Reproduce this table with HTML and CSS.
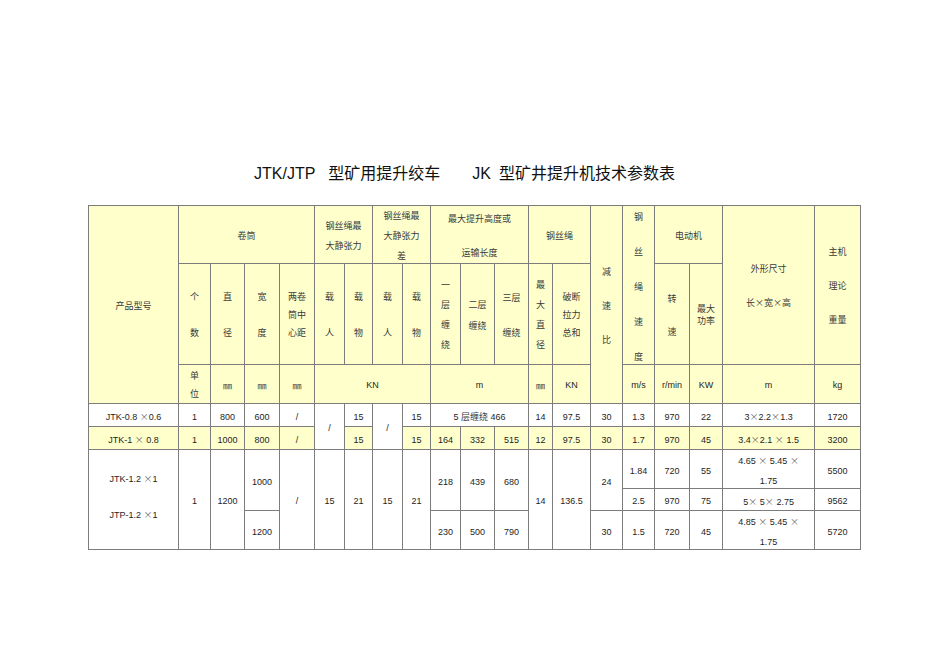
FILE: index.html
```html
<!DOCTYPE html>
<html lang="zh-CN">
<head>
<meta charset="utf-8">
<title>JTK/JTP 型矿用提升绞车 JK 型矿井提升机技术参数表</title>
<link rel="stylesheet" href="styles.css">
</head>
<body>
<div class="page">
  <h1 class="title"><span>JTK/JTP</span><span class="t1">型矿用提升绞车</span><span class="t2">JK</span><span class="t3">型矿井提升机技术参数表</span></h1>
  <table class="spec">
    <colgroup>
      <col class="c1"><col class="c2"><col class="c3"><col class="c4"><col class="c5">
      <col class="c6"><col class="c7"><col class="c8"><col class="c9"><col class="c10">
      <col class="c11"><col class="c12"><col class="c13"><col class="c14"><col class="c15">
      <col class="c16"><col class="c17"><col class="c18"><col class="c19"><col class="c20">
    </colgroup>
    <thead>
      <tr class="r1">
        <td class="h" rowspan="3">产品型号</td>
        <td class="h" colspan="4">卷筒</td>
        <td class="h lh20" colspan="2">钢丝绳最<br>大静张力</td>
        <td class="h lh20" colspan="2"><div class="sq">钢丝绳最<br>大静张力<br>差</div></td>
        <td class="h lh34" colspan="3"><div class="sq">最大提升高度或<br>运输长度</div></td>
        <td class="h" colspan="2">钢丝绳</td>
        <td class="h lh34" rowspan="3">减<br>速<br>比</td>
        <td class="h lh35" rowspan="2"><div class="sq10">钢<br>丝<br>绳<br>速<br>度</div></td>
        <td class="h" colspan="2">电动机</td>
        <td class="h lh34" rowspan="2">外形尺寸<br>长×宽×高</td>
        <td class="h lh34" rowspan="2">主机<br>理论<br>重量</td>
      </tr>
      <tr class="r2">
        <td class="h lh36">个<br>数</td>
        <td class="h lh36">直<br>径</td>
        <td class="h lh36">宽<br>度</td>
        <td class="h lh18">两卷<br>筒中<br>心距</td>
        <td class="h lh36">载<br>人</td>
        <td class="h lh36">载<br>物</td>
        <td class="h lh36">载<br>人</td>
        <td class="h lh36">载<br>物</td>
        <td class="h lh20">一<br>层<br>缠<br>绕</td>
        <td class="h lh21">二层<br>缠绕</td>
        <td class="h lh35">三层<br>缠绕</td>
        <td class="h lh20">最<br>大<br>直<br>径</td>
        <td class="h lh18">破断<br>拉力<br>总和</td>
        <td class="h lh33">转<br>速</td>
        <td class="h lh12">最大<br>功率</td>
      </tr>
      <tr class="r3">
        <td class="h lh18"><div class="sq">单<br>位</div></td>
        <td class="h">㎜</td>
        <td class="h">㎜</td>
        <td class="h">㎜</td>
        <td class="h u" colspan="4">KN</td>
        <td class="h u" colspan="3">m</td>
        <td class="h">㎜</td>
        <td class="h u">KN</td>
        <td class="h u">m/s</td>
        <td class="h u">r/min</td>
        <td class="h u">KW</td>
        <td class="h u">m</td>
        <td class="h u">kg</td>
      </tr>
    </thead>
    <tbody>
      <tr class="ra">
        <td>JTK-0.8 <span class="x">×</span>0.6</td>
        <td>1</td>
        <td>800</td>
        <td>600</td>
        <td>/</td>
        <td rowspan="2">/</td>
        <td>15</td>
        <td rowspan="2">/</td>
        <td>15</td>
        <td colspan="3">5 <span class="cn">层缠绕</span> 466</td>
        <td>14</td>
        <td>97.5</td>
        <td>30</td>
        <td>1.3</td>
        <td>970</td>
        <td>22</td>
        <td>3<span class="x">×</span>2.2<span class="x">×</span>1.3</td>
        <td>1720</td>
      </tr>
      <tr class="rb">
        <td class="y">JTK-1 <span class="x">×</span> 0.8</td>
        <td class="y">1</td>
        <td class="y">1000</td>
        <td class="y">800</td>
        <td class="y">/</td>
        <td class="y">15</td>
        <td class="y">15</td>
        <td class="y">164</td>
        <td class="y">332</td>
        <td class="y">515</td>
        <td class="y">12</td>
        <td class="y">97.5</td>
        <td class="y">30</td>
        <td class="y">1.7</td>
        <td class="y">970</td>
        <td class="y">45</td>
        <td class="y">3.4<span class="x">×</span>2.1 <span class="x">×</span> 1.5</td>
        <td class="y">3200</td>
      </tr>
      <tr class="rc">
        <td class="lh36 up" rowspan="3">JTK-1.2 <span class="x">×</span>1<br>JTP-1.2 <span class="x">×</span>1</td>
        <td rowspan="3">1</td>
        <td rowspan="3">1200</td>
        <td rowspan="2">1000</td>
        <td rowspan="3">/</td>
        <td rowspan="3">15</td>
        <td rowspan="3">21</td>
        <td rowspan="3">15</td>
        <td rowspan="3">21</td>
        <td rowspan="2">218</td>
        <td rowspan="2">439</td>
        <td rowspan="2">680</td>
        <td rowspan="3">14</td>
        <td rowspan="3">136.5</td>
        <td rowspan="2">24</td>
        <td>1.84</td>
        <td>720</td>
        <td>55</td>
        <td class="lh20"><div class="sq">4.65 <span class="x">×</span> 5.45 <span class="x">×</span><br>1.75</div></td>
        <td>5500</td>
      </tr>
      <tr class="rd">
        <td>2.5</td>
        <td>970</td>
        <td>75</td>
        <td>5<span class="x">×</span> 5<span class="x">×</span> 2.75</td>
        <td>9562</td>
      </tr>
      <tr class="re">
        <td>1200</td>
        <td>230</td>
        <td>500</td>
        <td>790</td>
        <td>30</td>
        <td>1.5</td>
        <td>720</td>
        <td>45</td>
        <td class="lh20"><div class="sq">4.85 <span class="x">×</span> 5.45 <span class="x">×</span><br>1.75</div></td>
        <td>5720</td>
      </tr>
    </tbody>
  </table>
</div>
</body>
</html>
```
FILE: styles.css
```css
html, body {
  margin: 0;
  padding: 0;
  background: #ffffff;
}

body {
  font-family: "Liberation Sans", Arial, "Noto Sans CJK SC", sans-serif;
  color: #1e1e1e;
}

.page {
  padding-top: 162px;
}

.title {
  margin: 0 0 19px 254px;
  font-size: 16px;
  font-weight: normal;
  line-height: 24px;
  height: 24px;
  color: #111;
  white-space: nowrap;
}

.title .t1 { margin-left: 13px; }
.title .t2 { margin-left: 32px; }
.title .t3 { margin-left: 8px; }

.spec {
  margin-left: 88px;
  border-collapse: collapse;
  table-layout: fixed;
  width: 773px;
}

.c1 { width: 90px; }
.c2 { width: 32px; }
.c3 { width: 34px; }
.c4 { width: 35px; }
.c5 { width: 35px; }
.c6 { width: 30px; }
.c7 { width: 28px; }
.c8 { width: 30px; }
.c9 { width: 28px; }
.c10 { width: 30px; }
.c11 { width: 34px; }
.c12 { width: 34px; }
.c13 { width: 24px; }
.c14 { width: 38px; }
.c15 { width: 32px; }
.c16 { width: 32px; }
.c17 { width: 35px; }
.c18 { width: 33px; }
.c19 { width: 92px; }
.c20 { width: 46px; }

.spec td {
  border: 1px solid #7c7c7c;
  padding: 4px 0 0;
  text-align: center;
  vertical-align: middle;
  font-size: 9px;
  line-height: 11px;
  overflow: hidden;
  white-space: nowrap;
}

.spec td.up {
  padding: 0 0 6px;
}

.spec td.h {
  background: #ffffcc;
  font-family: "Noto Sans CJK SC", sans-serif;
  color: #3a3a3a;
  padding: 2px 0 0;
}

.spec td.h.u {
  font-family: "Liberation Sans", Arial, sans-serif;
  color: #1e1e1e;
}

.spec td.y {
  background: #ffffcc;
}

.r1 { height: 58px; }
.r2 { height: 101px; }
.r3 { height: 39px; }
.ra { height: 23px; }
.rb { height: 23px; }
.rc { height: 39px; }
.rd { height: 22px; }
.re { height: 39px; }

.spec td.lh12 { line-height: 12px; }
.spec td.lh18 { line-height: 18px; }
.spec td.lh20 { line-height: 20px; }
.spec td.lh21 { line-height: 21px; }
.spec td.lh33 { line-height: 33px; }
.spec td.lh34 { line-height: 34px; }
.spec td.lh35 { line-height: 35px; }
.spec td.lh36 { line-height: 36px; }

.sq { margin: -8px 0; }
.sq10 { margin: -12px 0; }

.x {
  font-family: "Noto Sans CJK SC", sans-serif;
  color: #6a6a6a;
}

.cn {
  font-family: "Noto Sans CJK SC", sans-serif;
  color: #3a3a3a;
}
```
